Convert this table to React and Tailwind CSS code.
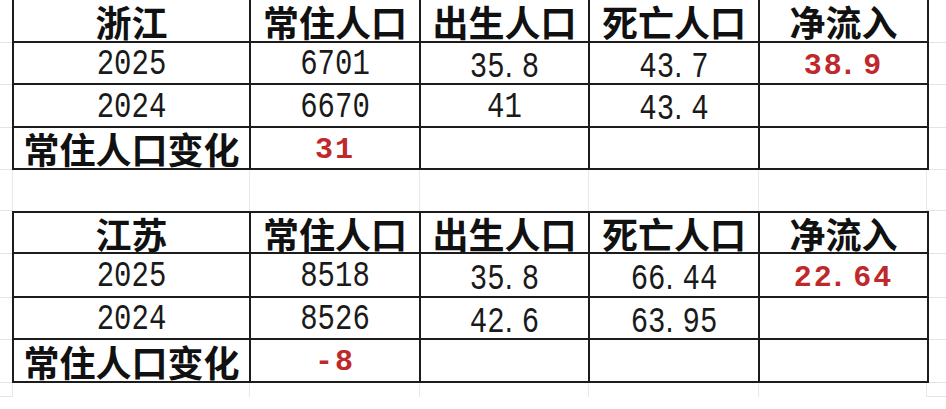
import React from "react";

const W = ["w-[235px]", "w-[168px]", "w-[167px]", "w-[168px]", "w-[167px]"];

const cjk = "font-['Noto_Sans_CJK_SC',sans-serif] font-bold text-[36px] leading-[34px] text-[#111] whitespace-nowrap";
const num = "inline-block font-['Liberation_Mono',monospace] text-[29px] leading-[26px] text-[#1a1a1a] scale-y-[1.3] mt-[4px] whitespace-nowrap";
const red = "inline-block font-['Liberation_Mono',monospace] font-bold text-[30px] leading-[26px] tracking-[2px] text-[#bf292b] mt-[3px] whitespace-nowrap";

function Cell({ i, children }) {
  return <div className={`${W[i]} bg-white flex items-center justify-center`}>{children}</div>;
}

function Row({ h, inner, cells }) {
  return (
    <div className={`flex ${h}`}>
      <div className="w-[12px] border-b border-[#e4e4e4]" />
      <div className={`flex gap-[2px] bg-[#1c1c1c] px-[2px] ${inner}`}>
        {cells.map((c, i) => (
          <Cell key={i} i={i}>{c}</Cell>
        ))}
      </div>
      <div className="flex-1 border-b border-[#e4e4e4]" />
    </div>
  );
}

function Gap({ h }) {
  return (
    <div className={`flex ${h}`}>
      <div className="w-[12px] border-b border-[#e4e4e4]" />
      <div className="w-[237px] border-l border-[#e8e8e8]" />
      <div className="w-[170px] border-l border-[#e8e8e8]" />
      <div className="w-[169px] border-l border-[#e8e8e8]" />
      <div className="w-[170px] border-l border-[#e8e8e8]" />
      <div className="w-[169px] border-l border-r border-[#e8e8e8]" />
      <div className="flex-1 border-b border-[#e4e4e4]" />
    </div>
  );
}

function Table({ name, top, rows }) {
  const hdr = [name, "常住人口", "出生人口", "死亡人口", "净流入"].map((t, i) => (
    <span key={i} className={cjk}>{t}</span>
  ));
  return (
    <>
      <Row h="h-[43px]" inner={top ? "pb-[2px]" : "pt-[2px] pb-[2px]"} cells={hdr} />
      {rows.map((r, k) => (
        <Row key={k} h={r.h} inner="pb-[2px]" cells={r.cells} />
      ))}
    </>
  );
}

function Digits({ t }) {
  const parts = t.split(".");
  if (parts.length === 1) return t;
  return (
    <>
      {parts[0]}
      <span className="font-['Liberation_Sans',sans-serif] mr-[9px]">.</span>
      {parts[1]}
    </>
  );
}

const n = (t) => (
  <span className={num}>
    <Digits t={t} />
  </span>
);
const r = (t) => (
  <span className={red}>
    <Digits t={t} />
  </span>
);
const change = <span className={cjk}>常住人口变化</span>;

export default function App() {
  return (
    <div className="w-[946px] h-[409px] bg-white overflow-hidden flex flex-col">
      <Table
        name="浙江"
        top
        rows={[
          { h: "h-[42px]", cells: [n("2025"), n("6701"), n("35.8"), n("43.7"), r("38.9")] },
          { h: "h-[43px]", cells: [n("2024"), n("6670"), n("41"), n("43.4"), null] },
          { h: "h-[42px]", cells: [change, r("31"), null, null, null] },
        ]}
      />
      <Gap h="h-[41px]" />
      <Table
        name="江苏"
        rows={[
          { h: "h-[44px]", cells: [n("2025"), n("8518"), n("35.8"), n("66.44"), r("22.64")] },
          { h: "h-[42px]", cells: [n("2024"), n("8526"), n("42.6"), n("63.95"), null] },
          { h: "h-[43px]", cells: [change, r("-8"), null, null, null] },
        ]}
      />
      <Gap h="h-[14px]" />
    </div>
  );
}
